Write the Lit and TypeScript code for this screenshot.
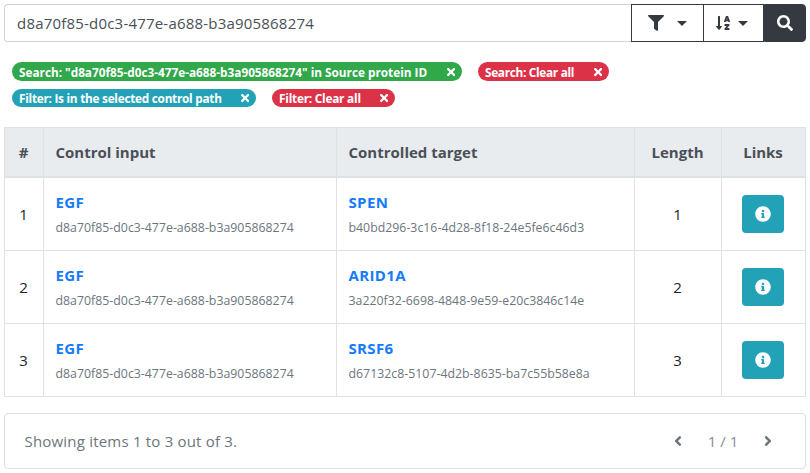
import { LitElement, html, css, svg } from "lit";
import { customElement } from "lit/decorators.js";

const icons: Record<string, { w: number; d: string }> = {
  filter: { w: 512, d: "M487.976 0H24.028C2.71 0-8.047 25.866 7.058 40.971L192 225.941V432c0 7.831 3.821 15.17 10.237 19.662l80 55.98C298.02 518.69 320 507.493 320 487.98V225.941l184.947-184.97C520.021 25.896 509.338 0 487.976 0z" },
  sort: { w: 448, d: "M176 352h-48V48a16 16 0 0 0-16-16H80a16 16 0 0 0-16 16v304H16c-14.19 0-21.36 17.24-11.29 27.31l80 96a16 16 0 0 0 22.62 0l80-96C197.35 369.26 190.22 352 176 352zm240-64H288a16 16 0 0 0-16 16v32a16 16 0 0 0 16 16h56l-61.26 70.45A32 32 0 0 0 272 446.37V464a16 16 0 0 0 16 16h128a16 16 0 0 0 16-16v-32a16 16 0 0 0-16-16h-56l61.26-70.45A32 32 0 0 0 432 321.63V304a16 16 0 0 0-16-16zm31.06-85.38l-59.27-160A16 16 0 0 0 372.72 32h-41.44a16 16 0 0 0-15.07 10.62l-59.27 160A16 16 0 0 0 272 224h24.83a16 16 0 0 0 15.23-11.08l4.42-12.92h71l4.41 12.92A16 16 0 0 0 407.16 224H432a16 16 0 0 0 15.06-21.38zM335.61 144L352 96l16.39 48z" },
  search: { w: 512, d: "M505 442.7L405.3 343c-4.5-4.5-10.6-7-17-7H372c27.6-35.3 44-79.7 44-128C416 93.1 322.9 0 208 0S0 93.1 0 208s93.1 208 208 208c48.3 0 92.7-16.4 128-44v16.3c0 6.4 2.5 12.5 7 17l99.7 99.7c9.4 9.4 24.6 9.4 33.9 0l28.3-28.3c9.4-9.4 9.4-24.6.1-34zM208 336c-70.7 0-128-57.2-128-128 0-70.7 57.2-128 128-128 70.7 0 128 57.2 128 128 0 70.7-57.2 128-128 128z" },
  info: { w: 512, d: "M256 8C119.043 8 8 119.083 8 256c0 136.997 111.043 248 248 248s248-111.003 248-248C504 119.083 392.957 8 256 8zm0 110c23.196 0 42 18.804 42 42s-18.804 42-42 42-42-18.804-42-42 18.804-42 42-42zm56 254c0 6.627-5.373 12-12 12h-88c-6.627 0-12-5.373-12-12v-24c0-6.627 5.373-12 12-12h12v-64h-12c-6.627 0-12-5.373-12-12v-24c0-6.627 5.373-12 12-12h64c6.627 0 12 5.373 12 12v100h12c6.627 0 12 5.373 12 12v24z" },
  times: { w: 352, d: "M242.72 256l100.07-100.07c12.28-12.28 12.28-32.19 0-44.48l-22.24-22.24c-12.28-12.28-32.19-12.28-44.48 0L176 189.28 75.93 89.21c-12.28-12.28-32.19-12.28-44.48 0L9.21 111.45c-12.28 12.28-12.28 32.19 0 44.48L109.28 256 9.21 356.07c-12.28 12.28-12.28 32.19 0 44.48l22.24 22.24c12.28 12.28 32.2 12.28 44.48 0L176 322.72l100.07 100.07c12.28 12.28 32.2 12.28 44.48 0l22.24-22.24c12.28-12.28 12.28-32.19 0-44.48L242.72 256z" },
  left: { w: 256, d: "M31.7 239l136-136c9.4-9.4 24.6-9.4 33.9 0l22.6 22.6c9.4 9.4 9.4 24.6 0 33.9L127.9 256l96.4 96.4c9.4 9.4 9.4 24.6 0 33.9L201.7 409c-9.4 9.4-24.6 9.4-33.9 0l-136-136c-9.5-9.4-9.5-24.6-.1-34z" },
  right: { w: 256, d: "M224.3 273l-136 136c-9.4 9.4-24.6 9.4-33.9 0l-22.6-22.6c-9.4-9.4-9.4-24.6 0-33.9l96.4-96.4-96.4-96.4c-9.4-9.4-9.4-24.6 0-33.9L54.3 103c9.4-9.4 24.6-9.4 33.9 0l136 136c9.5 9.4 9.5 24.6.1 34z" },
};

const icon = (name: string, size = 16) => {
  const i = icons[name];
  return html`<svg width=${(i.w / 512) * size} height=${size} viewBox="0 0 ${i.w} 512" fill="currentColor" aria-hidden="true">${svg`<path d=${i.d}></path>`}</svg>`;
};

const SOURCE = "d8a70f85-d0c3-477e-a688-b3a905868274";

const rows = [
  { target: "SPEN", id: "b40bd296-3c16-4d28-8f18-24e5fe6c46d3", length: 1 },
  { target: "ARID1A", id: "3a220f32-6698-4848-9e59-e20c3846c14e", length: 2 },
  { target: "SRSF6", id: "d67132c8-5107-4d2b-8635-ba7c55b58e8a", length: 3 },
];

@customElement("app-root")
export class AppRoot extends LitElement {
  static styles = css`
    :host {
      display: block;
      box-sizing: border-box;
      height: 473px;
      padding: 4px 4px 0;
      background: #fff;
      color: #212529;
      font: 15px/24px "Open Sans", "Noto Sans", sans-serif;
      overflow: hidden;
    }
    * { box-sizing: border-box; }
    svg { display: block; flex: none; }
    .search { display: flex; height: 38px; width: 802px; }
    .field {
      flex: 1;
      border: 1px solid #ced4da;
      border-right: 0;
      border-radius: 4px 0 0 4px;
      padding: 0 12px;
      line-height: 37px;
      letter-spacing: 0.2px;
      color: #495057;
    }
    .btn {
      display: flex;
      align-items: center;
      justify-content: center;
      border: 1px solid #343a40;
      color: #343a40;
      background: #fff;
    }
    .filter { width: 73px; gap: 13px; padding-right: 1px; }
    .sort { width: 61px; gap: 8px; margin-left: -1px; padding-right: 3px; }
    .go { width: 42px; background: #343a40; color: #fff; border-radius: 0 4px 4px 0; }
    .caret { border: 5px solid transparent; border-top-color: currentColor; border-bottom: 0; }
    .tags { display: flex; gap: 16px; padding-left: 8px; height: 19px; margin-top: 20px; }
    .tags + .tags { margin-top: 8px; height: 18px; }
    .tag {
      display: flex;
      align-items: center;
      justify-content: space-between;
      border-radius: 10px;
      padding: 0 7px;
      font-size: 11.8px;
      font-weight: 700;
      line-height: 18px;
      white-space: nowrap;
      color: #fff;
    }
    .green { background: #31a84a; }
    .teal { background: #23a2b7; }
    .red { background: #dc3248; }
    .w1 { width: 450px; letter-spacing: -0.01px; }
    .w2 { width: 131px; letter-spacing: -0.3px; }
    .w3 { width: 244px; letter-spacing: -0.26px; }
    .w4 { width: 123px; letter-spacing: -0.22px; }
    .table {
      display: grid;
      grid-template-columns: 39px 293px 298px 87px 84px;
      grid-template-rows: 50px 73px 73px 73px;
      width: 802px;
      height: 270px;
      margin-top: 20px;
      border-top: 1px solid #dee2e6;
      border-left: 1px solid #dee2e6;
    }
    .cell {
      border-right: 1px solid #dee2e6;
      border-bottom: 1px solid #dee2e6;
      padding: 0 11.5px;
      display: flex;
      flex-direction: column;
      justify-content: center;
    }
    .head {
      background: #e9ecef;
      color: #495057;
      font-weight: 700;
      border-bottom-width: 2px;
    }
    .mid { align-items: center; padding: 0 1px 0 0; }
    .pair { padding-top: 2px; }
    .name { color: #157bfb; font-weight: 700; line-height: 25px; letter-spacing: 0.35px; }
    .id { color: #6c757d; font-size: 12.3px; line-height: 25px; letter-spacing: 0.02px; }
    .info {
      width: 42px;
      height: 38px;
      border-radius: 4px;
      background: #23a2b7;
      color: #fff;
      display: flex;
      align-items: center;
      justify-content: center;
    }
    .foot {
      display: flex;
      align-items: center;
      justify-content: space-between;
      width: 802px;
      height: 56px;
      margin-top: 16px;
      padding: 0 33px 0 19.5px;
      border: 1px solid #dfdfdf;
      border-radius: 4px;
      color: #6c757d;
    }
    .showing { letter-spacing: 0.2px; }
    .pager { display: flex; align-items: center; }
    .count { width: 82px; text-align: center; color: #868e96; }
  `;

  private tag(kind: string, text: string) {
    return html`<div class="tag ${kind}"><span>${text}</span>${icon("times", 12)}</div>`;
  }

  render() {
    return html`
      <div class="search">
        <div class="field"><span>${SOURCE}</span></div>
        <div class="btn filter">${icon("filter")}<span class="caret"></span></div>
        <div class="btn sort">${icon("sort")}<span class="caret"></span></div>
        <div class="btn go">${icon("search")}</div>
      </div>
      <div class="tags">
        ${this.tag("green w1", `Search: "${SOURCE}" in Source protein ID`)}
        ${this.tag("red w2", "Search: Clear all")}
      </div>
      <div class="tags">
        ${this.tag("teal w3", "Filter: Is in the selected control path")}
        ${this.tag("red w4", "Filter: Clear all")}
      </div>
      <div class="table">
        <div class="cell head mid">#</div>
        <div class="cell head">Control input</div>
        <div class="cell head">Controlled target</div>
        <div class="cell head mid">Length</div>
        <div class="cell head mid">Links</div>
        ${rows.map(
          (r, i) => html`
            <div class="cell mid">${i + 1}</div>
            <div class="cell pair"><span class="name">EGF</span><span class="id">${SOURCE}</span></div>
            <div class="cell pair"><span class="name">${r.target}</span><span class="id">${r.id}</span></div>
            <div class="cell mid">${r.length}</div>
            <div class="cell mid"><span class="info">${icon("info")}</span></div>
          `
        )}
      </div>
      <div class="foot">
        <span class="showing">Showing items 1 to 3 out of 3.</span>
        <div class="pager">${icon("left")}<span class="count">1 / 1</span>${icon("right")}</div>
      </div>
    `;
  }
}
